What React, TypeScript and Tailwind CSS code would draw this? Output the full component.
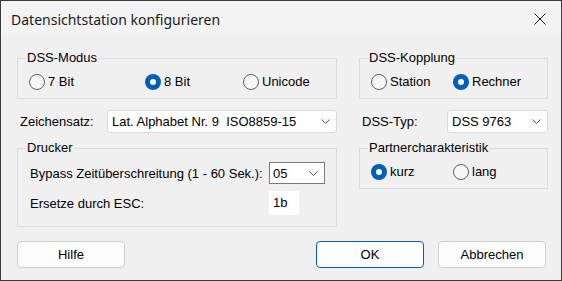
import type { ReactNode } from 'react';

function Radio({ label, checked, className = '' }: { label: string; checked?: boolean; className?: string }) {
  return (
    <div className={`flex items-center ${className}`}>
      {checked ? (
        <span className="w-4 h-4 rounded-full bg-[#005fb8] flex items-center justify-center shrink-0">
          <span className="w-[6px] h-[6px] rounded-full bg-white" />
        </span>
      ) : (
        <span className="w-4 h-4 rounded-full border border-[#5f5f5f] bg-[#f6f6f6] shrink-0" />
      )}
      <span className="ml-[3px] pt-[1px] leading-[16px]">{label}</span>
    </div>
  );
}

function Group({ title, className = '', children }: { title: string; className?: string; children?: ReactNode }) {
  return (
    <div className={`relative border border-[#dcdcdc] ${className}`}>
      <span className="absolute -top-[9px] left-[8px] bg-[#f0f0f0] px-[1px] leading-[16px]">{title}</span>
      {children}
    </div>
  );
}

function Chevron() {
  return (
    <svg width="9" height="5" viewBox="0 0 9 5" className="shrink-0">
      <path d="M0.5 0.5 L4.5 4.5 L8.5 0.5" fill="none" stroke="#555" strokeWidth="1" />
    </svg>
  );
}

function Combo({ value, className = '' }: { value: string; className?: string }) {
  return (
    <div className={`flex items-center bg-white border border-[#d9d9d9] rounded-[3px] pl-[4px] pr-[6px] ${className}`}>
      <span className="flex-1 whitespace-pre leading-[16px] pt-[1px]">{value}</span>
      <Chevron />
    </div>
  );
}

function Button({ label, primary, className = '' }: { label: string; primary?: boolean; className?: string }) {
  return (
    <button
      className={`w-[108px] h-[27px] rounded-[4px] bg-[#fdfdfd] text-black text-[13px] ${
        primary ? 'border border-[#005fb8]' : 'border border-[#d0d0d0]'
      } ${className}`}
    >
      {label}
    </button>
  );
}

export default function App() {
  return (
    <div className="w-[562px] h-[281px] border border-[#3a3a3a] bg-[#f0f0f0] text-black text-[13px] font-['Liberation_Sans',Arial,sans-serif] overflow-hidden">
      {/* Title bar */}
      <div className="flex items-start h-[35px] bg-[#f3f3f3] pl-[10px] pt-[9px]">
        <span className="font-['Noto_Sans',sans-serif] text-[14px] leading-[20px] text-[#1a1a1a]">
          Datensichtstation konfigurieren
        </span>
        <svg width="12" height="12" viewBox="0 0 12 12" className="ml-auto mr-[15px] mt-[3px]">
          <path d="M0.5 0.5 L11.5 11.5 M11.5 0.5 L0.5 11.5" stroke="#1a1a1a" strokeWidth="1" />
        </svg>
      </div>

      <div className="pl-[16px]">
        {/* Row 1 */}
        <div className="flex mt-[22px]">
          <Group title="DSS-Modus" className="w-[320px] h-[41px]">
            <div className="flex pt-[14px] pl-[11px]">
              <Radio label="7 Bit" className="w-[116px]" />
              <Radio label="8 Bit" checked className="w-[98px]" />
              <Radio label="Unicode" />
            </div>
          </Group>
          <Group title="DSS-Kopplung" className="ml-[22px] w-[189px] h-[41px]">
            <div className="flex pt-[14px] pl-[11px]">
              <Radio label="Station" className="w-[82px]" />
              <Radio label="Rechner" checked />
            </div>
          </Group>
        </div>

        {/* Row 2 */}
        <div className="flex items-center mt-[11px] h-[23px]">
          <div className="w-[90px] pl-[3px] pt-[1px]">Zeichensatz:</div>
          <Combo value="Lat. Alphabet Nr. 9  ISO8859-15" className="w-[230px] h-[23px]" />
          <div className="ml-[22px] w-[88px] pl-[3px] pt-[1px]">DSS-Typ:</div>
          <Combo value="DSS 9763" className="w-[101px] h-[23px]" />
        </div>

        {/* Row 3 */}
        <div className="flex items-start mt-[15px]">
          <Group title="Drucker" className="w-[320px] h-[79px]">
            <div className="pt-[13px] pl-[12px]">
              <div className="flex items-center h-[22px]">
                <div className="w-[239px] pt-[1px]">Bypass Zeitüberschreitung (1 - 60 Sek.):</div>
                <div className="flex items-center w-[56px] h-[22px] bg-white border border-[#7a7a7a] pl-[3px] pr-[6px]">
                  <span className="flex-1 leading-[16px] pt-[1px]">05</span>
                  <Chevron />
                </div>
              </div>
              <div className="flex items-center h-[24px] mt-[7px]">
                <div className="w-[239px] pt-[1px]">Ersetze durch ESC:</div>
                <div className="flex items-center w-[30px] h-[24px] bg-white pl-[4px]">
                  <span className="leading-[16px]">1b</span>
                </div>
              </div>
            </div>
          </Group>
          <Group title="Partnercharakteristik" className="ml-[22px] w-[189px] h-[41px]">
            <div className="flex pt-[14px] pl-[11px]">
              <Radio label="kurz" checked className="w-[82px]" />
              <Radio label="lang" />
            </div>
          </Group>
        </div>

        {/* Buttons */}
        <div className="flex mt-[14px]">
          <Button label="Hilfe" />
          <Button label="OK" primary className="ml-[191px]" />
          <Button label="Abbrechen" className="ml-[14px]" />
        </div>
      </div>
    </div>
  );
}
